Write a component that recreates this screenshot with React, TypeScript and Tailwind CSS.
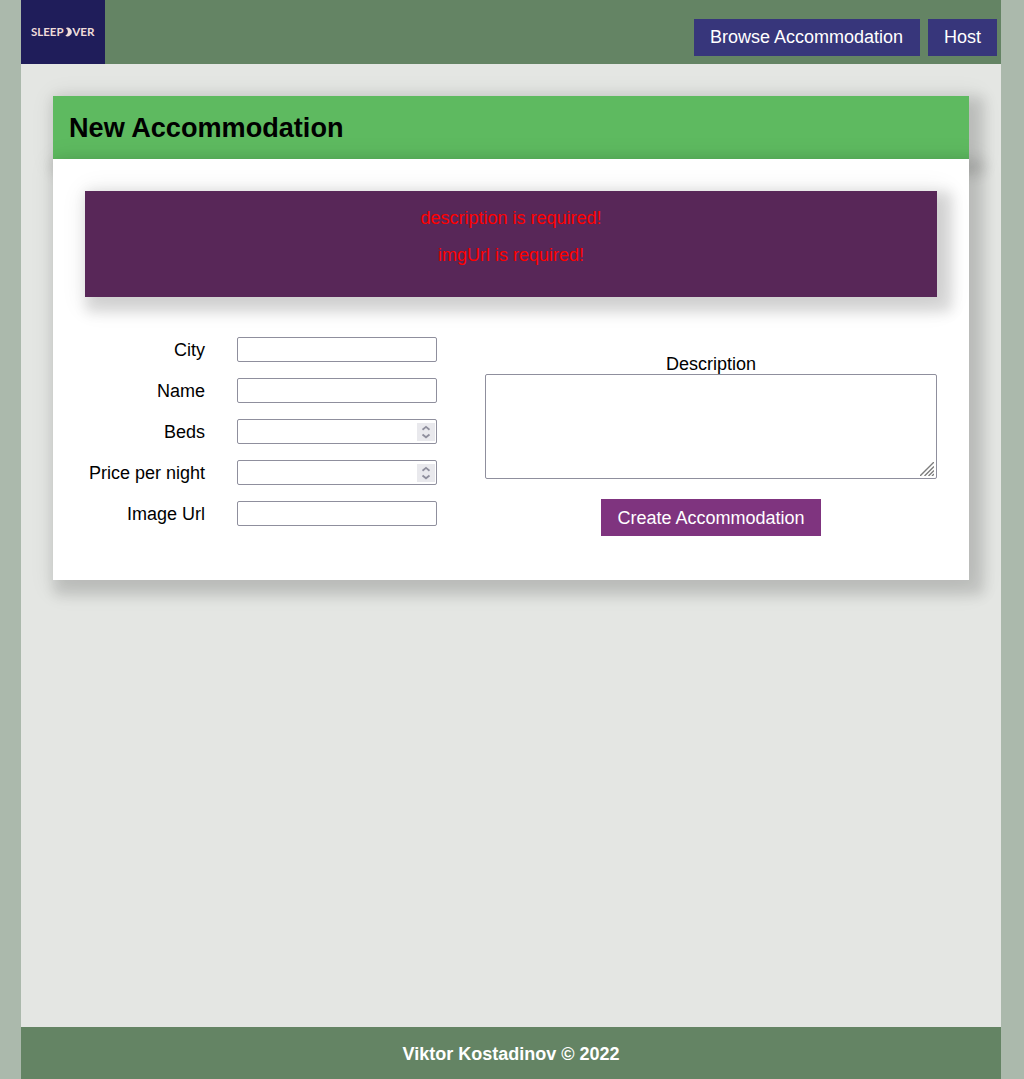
const SHADOW =
  "shadow-[8px_8px_12px_7px_rgba(0,0,0,0.12),5px_5px_24px_5px_rgba(0,0,0,0.09)]";

const FIELD =
  "block h-[25px] w-[200px] rounded-[2px] border border-[#8f8f9d] bg-white";

function Logo() {
  return (
    <div className="flex h-16 w-21 items-center justify-center bg-[#1f1d5a]">
      <svg width="84" height="64" viewBox="0 0 84 64" fill="#efdcd9">
        <text x="10" y="36.3" fontFamily="Lato, sans-serif" fontSize="12" fontWeight="700" textLength="32.5" lengthAdjust="spacingAndGlyphs">
          SLEEP
        </text>
        <path d="M44.8 27.9 A4.4 4.4 0 1 1 44.3 35.8 A4.5 4.5 0 0 0 44.8 27.9Z" />
        <text x="51.2" y="36.3" fontFamily="Lato, sans-serif" fontSize="12" fontWeight="700" textLength="22.3" lengthAdjust="spacingAndGlyphs">
          VER
        </text>
      </svg>
    </div>
  );
}

function Spinner() {
  return (
    <svg className="pointer-events-none absolute top-[4px] right-[2px] bg-[#e9e9ed]" width="18" height="18" viewBox="0 0 18 18" fill="none" stroke="#8f8f9d" strokeWidth="1.8">
      <path d="M5.5 6.7 L9 3.9 L12.5 6.7 M5.5 11.5 L9 14.3 L12.5 11.5" />
    </svg>
  );
}

function Field({ label, numeric = false }: { label: string; numeric?: boolean }) {
  return (
    <label className="flex h-[25px] items-center gap-8">
      <span className="w-[120px] pt-0.5 text-right">{label}</span>
      <span className="relative">
        <input type="text" inputMode={numeric ? "numeric" : "text"} className={FIELD} />
        {numeric && <Spinner />}
      </span>
    </label>
  );
}

export default function App() {
  return (
    <div className="flex min-h-[1079px] justify-center bg-[#abb9ac] pr-0.5 font-['Liberation_Sans',Arial,sans-serif] text-[18px] leading-[21px] text-black">
      <div className="flex w-[980px] flex-col bg-[#e4e6e3]">
        <header className="flex h-16 items-end justify-between bg-[#648464]">
          <Logo />
          <nav className="flex gap-2 pr-1 pb-2 text-white">
            <a className="w-[226px] bg-[#37367b] py-2 pl-4 whitespace-nowrap">Browse Accommodation</a>
            <a className="bg-[#37367b] px-4 py-2">Host</a>
          </nav>
        </header>

        <main className="grow overflow-hidden p-8">
          <h1 className={`h-[63px] bg-[#5eba60] px-4 pt-4 text-[27.1px] leading-[31px] font-bold ${SHADOW}`}>
            New Accommodation
          </h1>
          <form className={`h-[421px] bg-white p-8 ${SHADOW}`}>
            <div className={`h-[106px] bg-[#582758] pt-[17px] text-center text-[#ff0000] ${SHADOW}`}>
              <p className="mb-4">description is required!</p>
              <p>imgUrl is required!</p>
            </div>
            <div className="flex gap-12 pt-10">
              <div className="flex w-[352px] flex-col gap-4">
                <Field label="City" />
                <Field label="Name" />
                <Field label="Beds" numeric />
                <Field label="Price per night" numeric />
                <Field label="Image Url" />
              </div>
              <div className="flex w-[452px] flex-col items-center pt-[17px]">
                <label htmlFor="description" className="h-5">Description</label>
                <div className="relative">
                  <textarea id="description" className="block h-[105px] w-[452px] resize-none rounded-[2px] border border-[#8f8f9d] bg-transparent" />
                  <svg className="pointer-events-none absolute right-[3px] bottom-[3px]" width="14" height="14" viewBox="0 0 14 14" stroke="#7d7d7d" strokeWidth="1.4">
                    <path d="M0 14 L14 0 M4.5 14 L14 4.5 M8.5 14 L14 8.5 M12 14 L14 12" />
                  </svg>
                </div>
                <button type="button" className="mt-5 h-[37px] bg-[#7f347f] px-4 pt-0.5 text-white">
                  Create Accommodation
                </button>
              </div>
            </div>
          </form>
        </main>

        <footer className="h-[52px] bg-[#648464] pt-[17px] text-center font-bold text-white">
          Viktor Kostadinov © 2022
        </footer>
      </div>
    </div>
  );
}
